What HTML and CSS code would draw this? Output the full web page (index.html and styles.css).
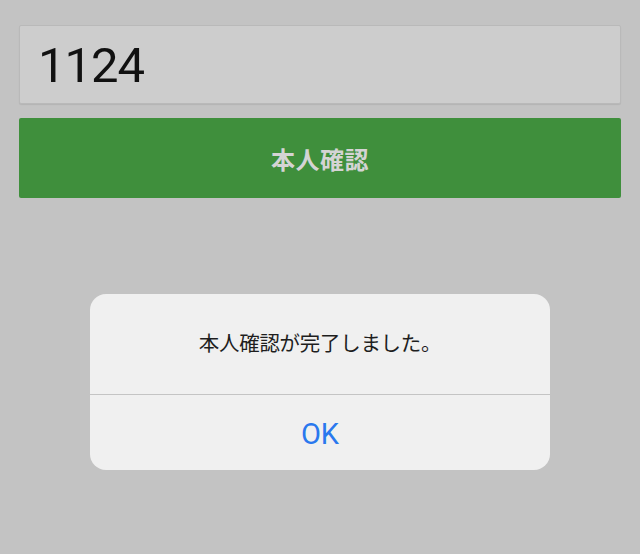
FILE: index.html
```html
<!DOCTYPE html>
<html lang="ja">
<head>
<meta charset="utf-8">
<link rel="stylesheet" href="styles.css">
</head>
<body>
<div class="page">
  <div class="field">1124</div>
  <div class="verify">本人確認</div>
</div>
<div class="overlay">
  <div class="alert">
    <div class="alert-msg">本人確認が完了しました。</div>
    <div class="alert-btn">OK</div>
  </div>
</div>
</body>
</html>
```
FILE: styles.css
```css
html, body {
  margin: 0;
  padding: 0;
  height: 100%;
}
body {
  background: #c3c3c3;
  font-family: Roboto, "Noto Sans CJK JP", sans-serif;
}
.page {
  padding: 25px 19px 0 19px;
  display: flex;
  flex-direction: column;
  gap: 14px;
}
.field {
  box-sizing: border-box;
  height: 79px;
  background: #cdcdcd;
  border: 1px solid #b9b9b9;
  border-radius: 2px;
  box-shadow: 0 1px 1px rgba(0,0,0,0.08);
  font-size: 49px;
  color: #111;
  display: flex;
  align-items: center;
  padding-left: 18px;
  padding-top: 2px;
  letter-spacing: -1px;
}
.verify {
  height: 80px;
  background: #3f8f3c;
  border-radius: 2px;
  color: #d4d4d4;
  font-family: "Noto Sans CJK JP", sans-serif;
  font-size: 24px;
  font-weight: 700;
  display: flex;
  align-items: center;
  justify-content: center;
  letter-spacing: 0.5px;
}
.overlay {
  position: absolute;
  left: 90px;
  top: 294px;
  width: 460px;
}
.alert {
  background: #f0f0f0;
  border-radius: 16px;
  overflow: hidden;
  display: flex;
  flex-direction: column;
}
.alert-msg {
  height: 101px;
  display: flex;
  align-items: center;
  justify-content: center;
  font-family: "Noto Sans CJK JP", sans-serif;
  font-size: 20.5px;
  color: #1e1e1e;
  padding-bottom: 4px;
  box-sizing: border-box;
  border-bottom: 1px solid #c4c4c4;
  letter-spacing: -0.3px;
}
.alert-btn {
  height: 75px;
  display: flex;
  align-items: center;
  justify-content: center;
  font-size: 29px;
  color: #2a78ee;
  padding-top: 2px;
  box-sizing: border-box;
}
```
